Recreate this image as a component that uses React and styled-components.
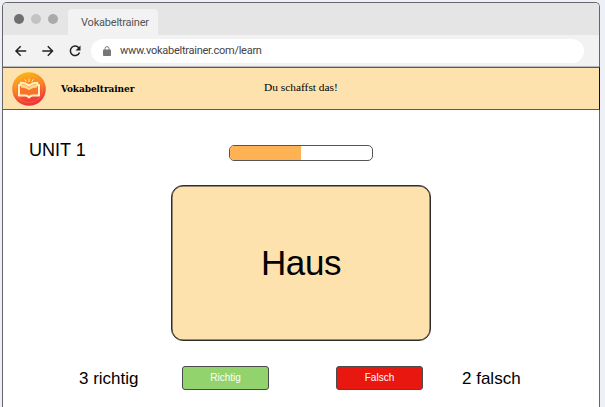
import React from 'react';
import styled, { createGlobalStyle } from 'styled-components';

const GlobalStyle = createGlobalStyle`
  * { box-sizing: border-box; }
  body { margin: 0; background: #edf1f7; overflow: hidden; }
`;

const BrowserWindow = styled.div`
  width: 598px;
  height: 405px;
  margin: 2px 0 0 2px;
  border: 1px solid #666;
  border-bottom: 0;
  border-radius: 5px 5px 0 0;
  background: #fff;
  font-family: 'Liberation Sans', Arial, sans-serif;
  color: #000;
`;

const TabStrip = styled.div`
  display: flex;
  align-items: flex-end;
  height: 32px;
  border-radius: 4px 4px 0 0;
  background: #e5e5e5;
`;

const WindowDots = styled.div`
  display: flex;
  gap: 7px;
  padding: 0 10px 11px 11px;
`;

const Dot = styled.span`
  width: 10px;
  height: 10px;
  border-radius: 50%;
  background: ${({ $color }) => $color};
`;

const Tab = styled.div`
  width: 90px;
  height: 26px;
  padding-left: 13px;
  border-radius: 4px 4px 0 0;
  background: #f2f2f2;
  font: 11px/28px Roboto, sans-serif;
  letter-spacing: -0.2px;
  color: #555;
`;

const Toolbar = styled.div`
  display: flex;
  align-items: center;
  height: 32px;
  padding: 1px 0 0 11px;
  border-bottom: 1px solid #b8bcbe;
  background: #f2f2f2;
`;

const NavIcons = styled.div`
  display: flex;
  gap: 13px;
`;

const NavIcon = styled.svg`
  width: 14px;
  height: 14px;
  fill: none;
  stroke: #222;
  stroke-width: 1.5;
`;

const AddressBar = styled.div`
  display: flex;
  align-items: center;
  width: 493px;
  height: 24px;
  margin-left: 9px;
  padding-left: 12px;
  border-radius: 12px;
  background: #fff;
  font: 11px/24px Roboto, sans-serif;
  letter-spacing: -0.26px;
  color: #444;
`;

const LockIcon = styled.svg`
  width: 8px;
  height: 10px;
  margin-right: 9px;
`;

const Header = styled.header`
  display: flex;
  align-items: center;
  height: 43px;
  margin-right: -1px;
  border: solid #5d594f;
  border-width: 1px 0;
  border-right: 1px solid #111;
  background: #fee2ae;
`;

const Logo = styled.svg`
  width: 34px;
  height: 34px;
  margin-left: 9px;
`;

const Brand = styled.div`
  width: 217px;
  padding-left: 15px;
  font: bold 10px/20px 'DejaVu Serif Condensed', 'DejaVu Serif', serif;
  font-stretch: condensed;
  letter-spacing: -0.1px;
`;

const Motto = styled.div`
  margin-top: -3px;
  padding-left: 1px;
  font: 11.4px/20px 'Liberation Serif', serif;
`;

const UnitRow = styled.div`
  display: flex;
  align-items: center;
  height: 16px;
  margin-top: 35px;
  padding-left: 26px;
`;

const UnitTitle = styled.h1`
  width: 200px;
  margin: -6px 0 0;
  font-size: 18px;
  font-weight: 400;
`;

const Progress = styled.div`
  width: 144px;
  height: 16px;
  border: 1px solid #555;
  border-radius: 5px;
  background: #fff;
  overflow: hidden;
`;

const ProgressFill = styled.div`
  height: 100%;
  width: ${({ $percent }) => $percent}%;
  background: #ffb253;
`;

const WordCard = styled.div`
  display: flex;
  align-items: center;
  justify-content: center;
  width: 260px;
  height: 156px;
  margin: 24px 0 0 168px;
  padding-bottom: 1px;
  border: 1px solid #2e2e2e;
  box-shadow: inset 0 0 0 0.5px #2e2e2e;
  border-radius: 12px;
  background: #fee2ae;
  font-size: 35px;
  letter-spacing: -0.4px;
`;

const AnswerRow = styled.div`
  display: flex;
  align-items: center;
  height: 24px;
  margin-top: 25px;
  padding-left: 76px;
`;

const Score = styled.div`
  width: ${({ $width }) => $width}px;
  margin-top: 1px;
  font-size: 17px;
  white-space: nowrap;
`;

const AnswerButton = styled.button`
  width: 87px;
  height: 24px;
  padding: 0 0 1px;
  border: 1px solid #4a4a4a;
  border-radius: 3px;
  background: ${({ $color }) => $color};
  color: #fff;
  font: 10px 'Liberation Sans', Arial, sans-serif;

  & + & { margin-left: 67px; }
  & + div { margin-left: 39px; }
`;

export default function App() {
  return (
    <>
      <GlobalStyle />
      <BrowserWindow>
        <TabStrip>
          <WindowDots>
            <Dot $color="#6f6f6f" />
            <Dot $color="#c3c3c3" />
            <Dot $color="#aaa" />
          </WindowDots>
          <Tab>Vokabeltrainer</Tab>
        </TabStrip>
        <Toolbar>
          <NavIcons>
            <NavIcon viewBox="0 0 14 14"><path d="M12.2 7H2.2M6.7 2.3 2 7l4.7 4.7" /></NavIcon>
            <NavIcon viewBox="0 0 14 14"><path d="M1.3 7h10M6.8 2.3 11.5 7l-4.7 4.7" /></NavIcon>
            <NavIcon viewBox="0 0 14 14">
              <path d="M11 4.2A4.7 4.7 0 1 0 11.5 8.4" />
              <path d="M12.5 1.5v5H7.5z" fill="#222" stroke="none" />
            </NavIcon>
          </NavIcons>
          <AddressBar>
            <LockIcon viewBox="0 0 8 10">
              <rect y="3.5" width="8" height="6.5" rx="0.8" fill="#777" />
              <path d="M2 4V2.6a2 2 0 0 1 4 0V4" fill="none" stroke="#777" />
            </LockIcon>
            www.vokabeltrainer.com/learn
          </AddressBar>
        </Toolbar>
        <Header>
          <Logo viewBox="0 0 34 34">
            <defs>
              <linearGradient id="coin" x1="0.35" y1="0" x2="0.65" y2="1">
                <stop offset="0" stopColor="#fdb515" />
                <stop offset="0.45" stopColor="#fa7d28" />
                <stop offset="0.75" stopColor="#f44336" />
                <stop offset="1" stopColor="#e9303f" />
              </linearGradient>
            </defs>
            <circle cx="17" cy="17" r="16.8" fill="url(#coin)" />
            <circle cx="17" cy="17" r="13.8" fill="none" stroke="#ffb13b" strokeOpacity="0.3" />
            <path
              d="M17 13.8c-2.8-2.7-5.5-3.1-8.3-3.1v2.4H7v10.3h6.4c1.6 0 2.8.7 3.6 2 .8-1.3 2-2 3.6-2H27V13.1h-1.7v-2.4c-2.8 0-5.5.4-8.3 3.1z"
              fill="#f9732c" stroke="#fff1c4" strokeWidth="2" strokeLinejoin="round"
            />
            <path d="M9 12.2c3 0 5.5.8 8 3.6 2.5-2.8 5-3.6 8-3.6v3.2c-3 0-5.5.8-8 2.8-2.5-2-5-2.8-8-2.8z" fill="#ffda86" />
            <path d="M17 6.5v3.5M12.5 7.2l1.8 2.4M21.5 7.2l-1.8 2.4" stroke="#fff1b0" strokeWidth="1" />
          </Logo>
          <Brand>Vokabeltrainer</Brand>
          <Motto>Du schaffst das!</Motto>
        </Header>
        <UnitRow>
          <UnitTitle>UNIT 1</UnitTitle>
          <Progress><ProgressFill $percent={50} /></Progress>
        </UnitRow>
        <WordCard>Haus</WordCard>
        <AnswerRow>
          <Score $width={103}>3 richtig</Score>
          <AnswerButton $color="#92d36e">Richtig</AnswerButton>
          <AnswerButton $color="#e81710">Falsch</AnswerButton>
          <Score $width={80}>2 falsch</Score>
        </AnswerRow>
      </BrowserWindow>
    </>
  );
}
